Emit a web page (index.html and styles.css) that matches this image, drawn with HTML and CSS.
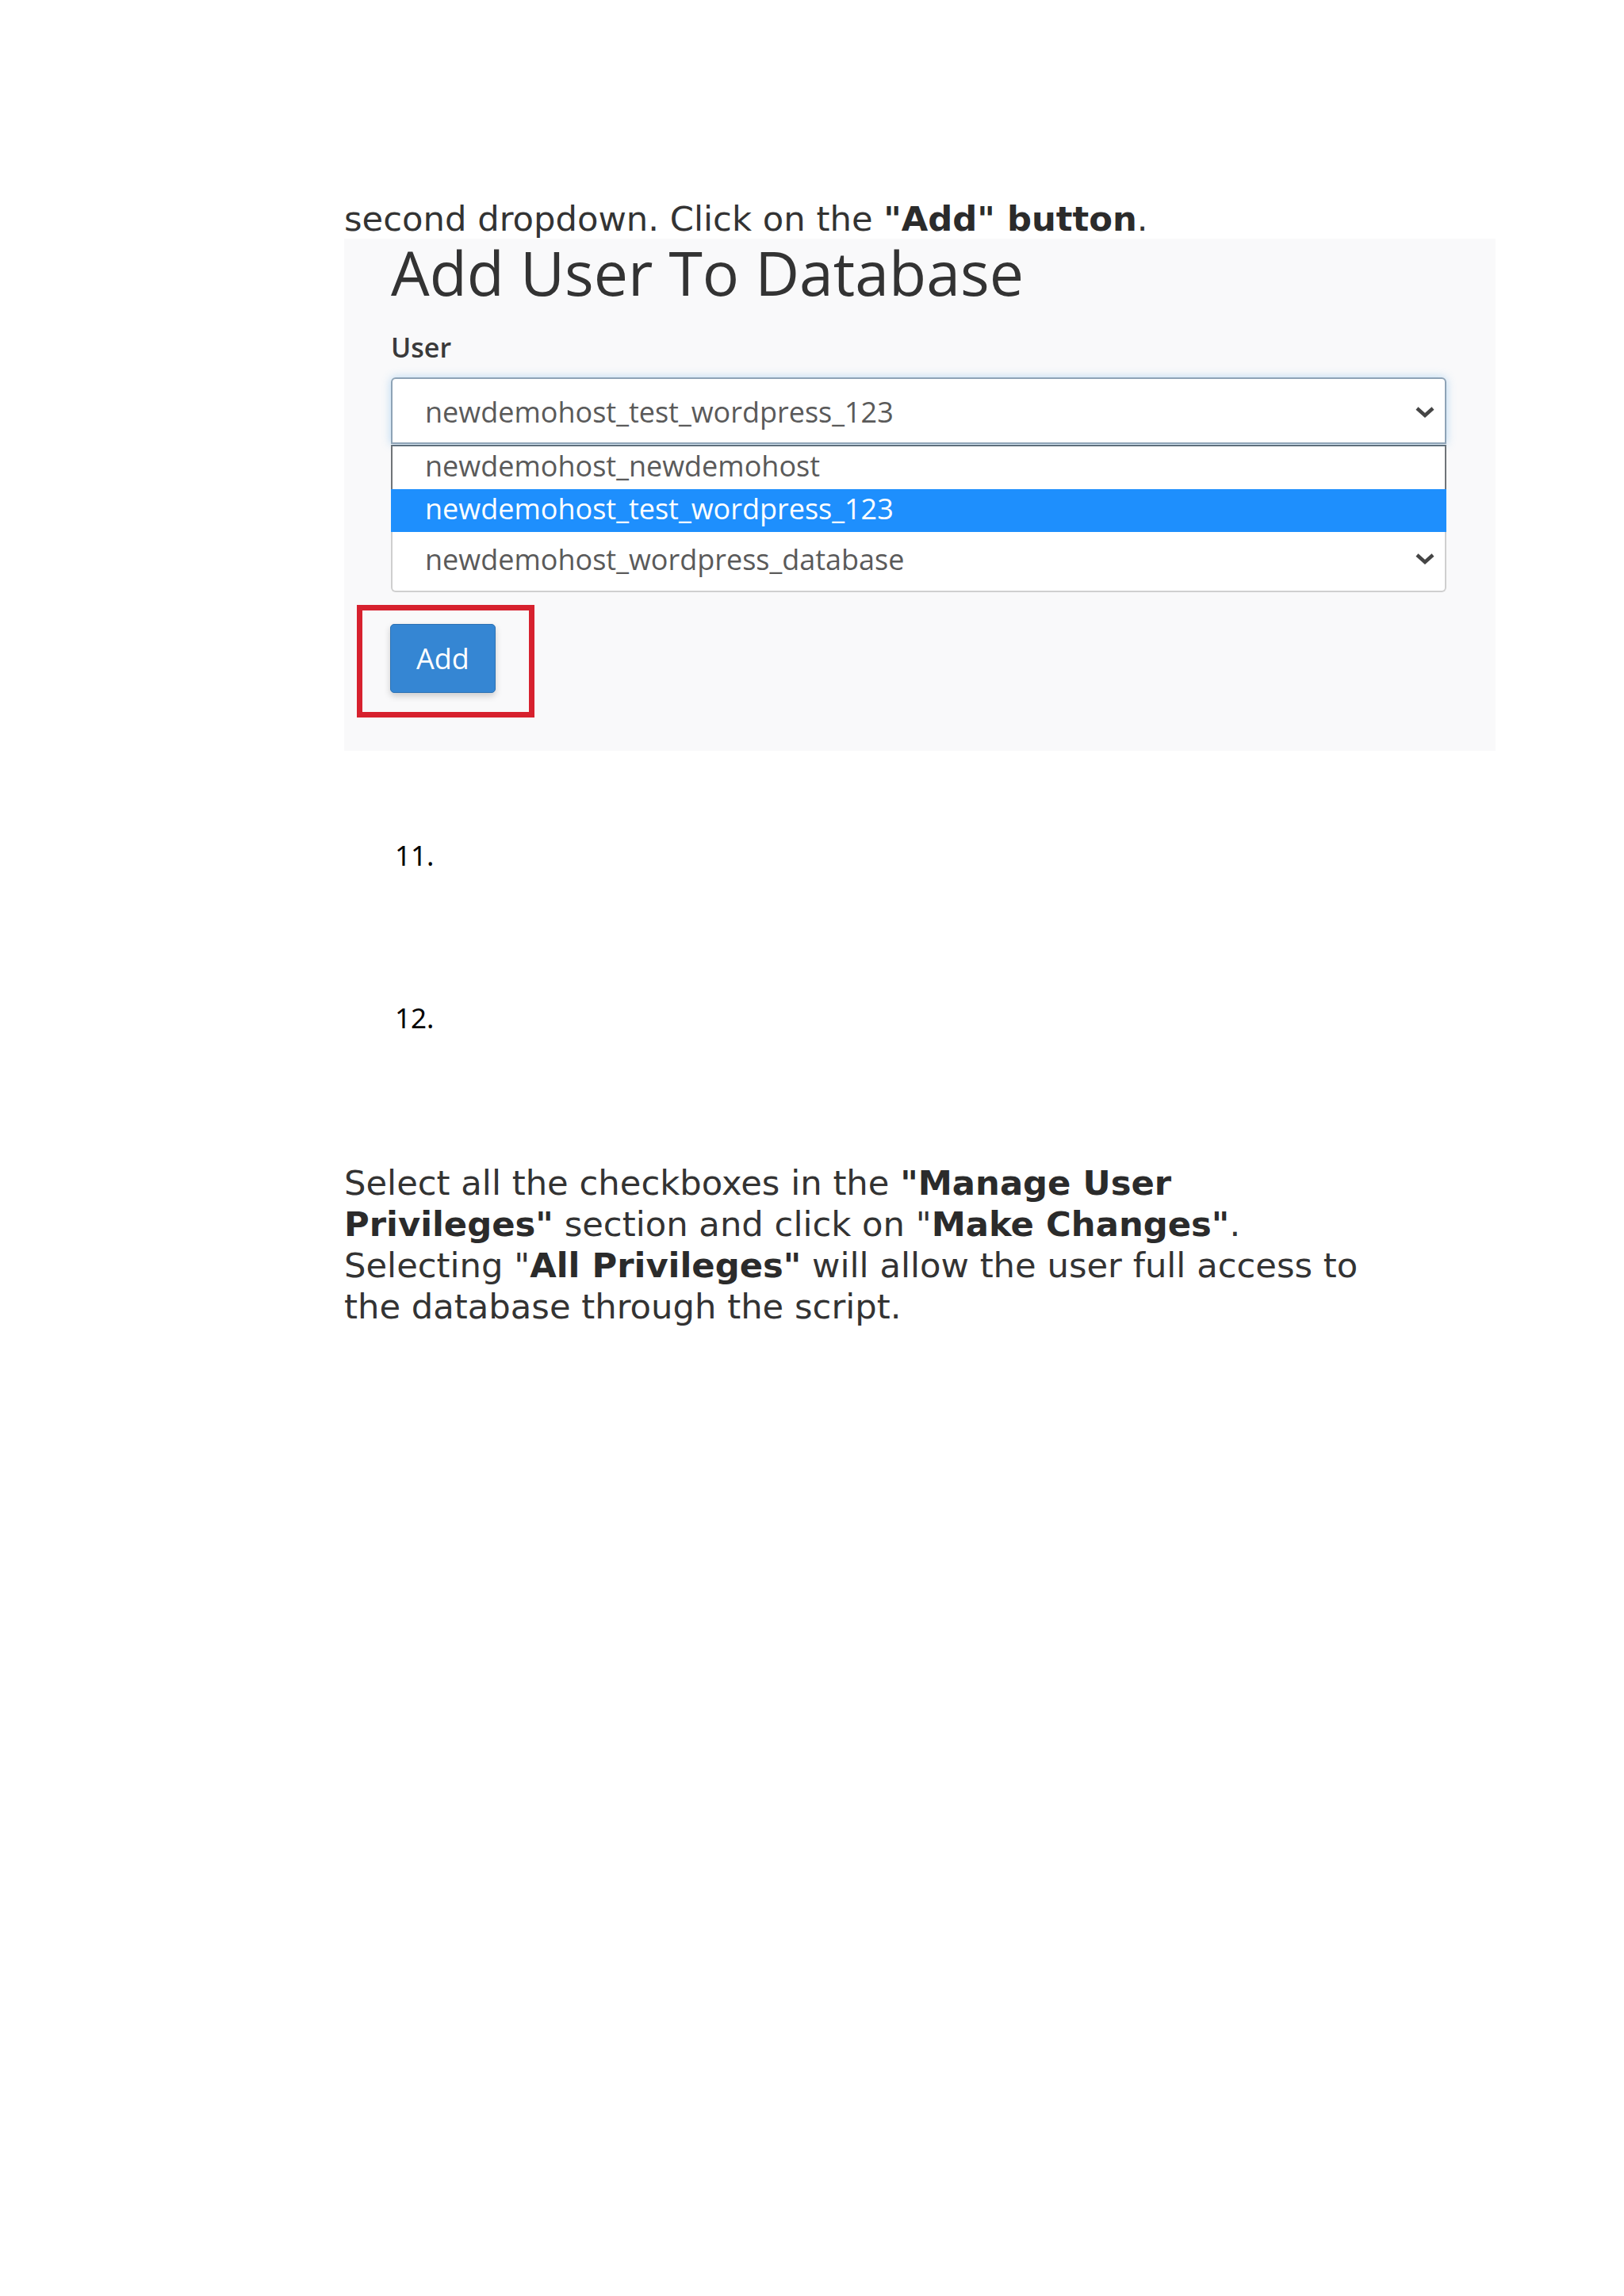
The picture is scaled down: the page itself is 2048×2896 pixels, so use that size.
FILE: index.html
```html
<!DOCTYPE html>
<html lang="en">
<head>
<meta charset="utf-8">
<title>Add User To Database</title>
<link rel="stylesheet" href="styles.css">
</head>
<body>
<div class="page">
  <p class="lead">second dropdown. Click on the <b>"Add" button</b>.</p>

  <div class="panel">
    <h1 class="title">Add User To Database</h1>
    <div class="label">User</div>
    <div class="select select-focused">
      <span class="select-text">newdemohost_test_wordpress_123</span>
      <svg class="chev" viewBox="0 0 26 16" width="26" height="16"><polyline points="3,3 13,12 23,3"/></svg>
    </div>
    <ul class="popup">
      <li class="option">newdemohost_newdemohost</li>
      <li class="option option-active">newdemohost_test_wordpress_123</li>
    </ul>
    <div class="select select-rest">
      <span class="select-text">newdemohost_wordpress_database</span>
      <svg class="chev" viewBox="0 0 26 16" width="26" height="16"><polyline points="3,3 13,12 23,3"/></svg>
    </div>
    <div class="callout">
      <button class="btn" type="button">Add</button>
    </div>
  </div>

  <div class="step">11.</div>
  <div class="step step-next">12.</div>

  <p class="para">Select all the checkboxes in the <b>"Manage User Privileges"</b> section and click on "<b>Make Changes"</b>. Selecting "<b>All Privileges"</b> will allow the user full access to the database through the script.</p>
</div>
</body>
</html>
```

FILE: styles.css
```css
html, body {
  margin: 0;
  padding: 0;
  background: #ffffff;
}

.page {
  margin-left: 434px;
  padding-top: 250px;
  padding-bottom: 200px;
}

.lead {
  margin: 0;
  font-family: "DejaVu Sans", Verdana, sans-serif;
  font-size: 43.3px;
  line-height: 52px;
  color: #333333;
  white-space: nowrap;
}

.lead b, .para b {
  color: #2b2b2b;
}

.panel {
  width: 1452px;
  box-sizing: border-box;
  margin-top: -1px;
  padding: 0 62px 42px 59px;
  background: #f9f9fa;
  font-family: "Open Sans", "Noto Sans", sans-serif;
}

.title {
  margin: 0;
  font-weight: 400;
  font-size: 77px;
  line-height: 86px;
  color: #333333;
}

.label {
  margin-top: 27px;
  font-size: 34px;
  font-weight: 600;
  line-height: 48px;
  color: #3a3a3a;
}

.select {
  display: flex;
  align-items: center;
  justify-content: space-between;
  box-sizing: border-box;
  padding: 0 12px 0 41px;
  background: #ffffff;
  font-size: 36px;
  color: #5a5a5a;
}

.select-focused {
  margin-top: 14px;
  height: 84px;
  padding-top: 3px;
  border: 2px solid #8ea3b6;
  border-radius: 6px 6px 0 0;
  box-shadow: 0 0 12px rgba(102, 175, 233, 0.45);
}

.select-rest {
  height: 76px;
  padding-bottom: 6px;
  border: 2px solid #cfcfcf;
  border-top: 0;
  border-radius: 0 0 6px 6px;
}

.chev {
  flex: none;
}

.chev polyline {
  fill: none;
  stroke: #454545;
  stroke-width: 4.5;
  stroke-linejoin: miter;
}

.popup {
  list-style: none;
  margin: 1px 0 0 0;
  padding: 0;
  border: 2px solid #6f7478;
  border-top-color: #5f6f7c;
  border-bottom: 0;
  background: #ffffff;
}

.option {
  height: 54px;
  box-sizing: border-box;
  padding: 0 0 4px 41px;
  line-height: 50px;
  font-size: 36px;
  color: #5a5a5a;
}

.option-active {
  margin: 0 -2px;
  padding-left: 43px;
  background: #1e8ffd;
  color: #ffffff;
}

.callout {
  width: fit-content;
  margin: 16px 0 0 -43px;
  padding: 17px 42px 24px 35px;
  border: 7px solid #d7212e;
}

.btn {
  display: block;
  width: 133px;
  height: 87px;
  padding: 0;
  border: 1px solid #2d72b4;
  border-radius: 5px;
  background: #3586d3;
  color: #ffffff;
  font-family: "Open Sans", "Noto Sans", sans-serif;
  font-size: 36px;
  line-height: 1;
  box-shadow: 0 4px 9px rgba(0, 0, 0, 0.18);
}

.step {
  margin-top: 107px;
  padding-left: 64px;
  font-family: "Noto Sans", "Open Sans", sans-serif;
  font-size: 35px;
  line-height: 50px;
  color: #000000;
}

.step-next {
  margin-top: 155px;
}

.para {
  width: 1290px;
  margin: 157px 0 0 0;
  font-family: "DejaVu Sans", Verdana, sans-serif;
  font-size: 43.3px;
  line-height: 52px;
  color: #333333;
}
```
